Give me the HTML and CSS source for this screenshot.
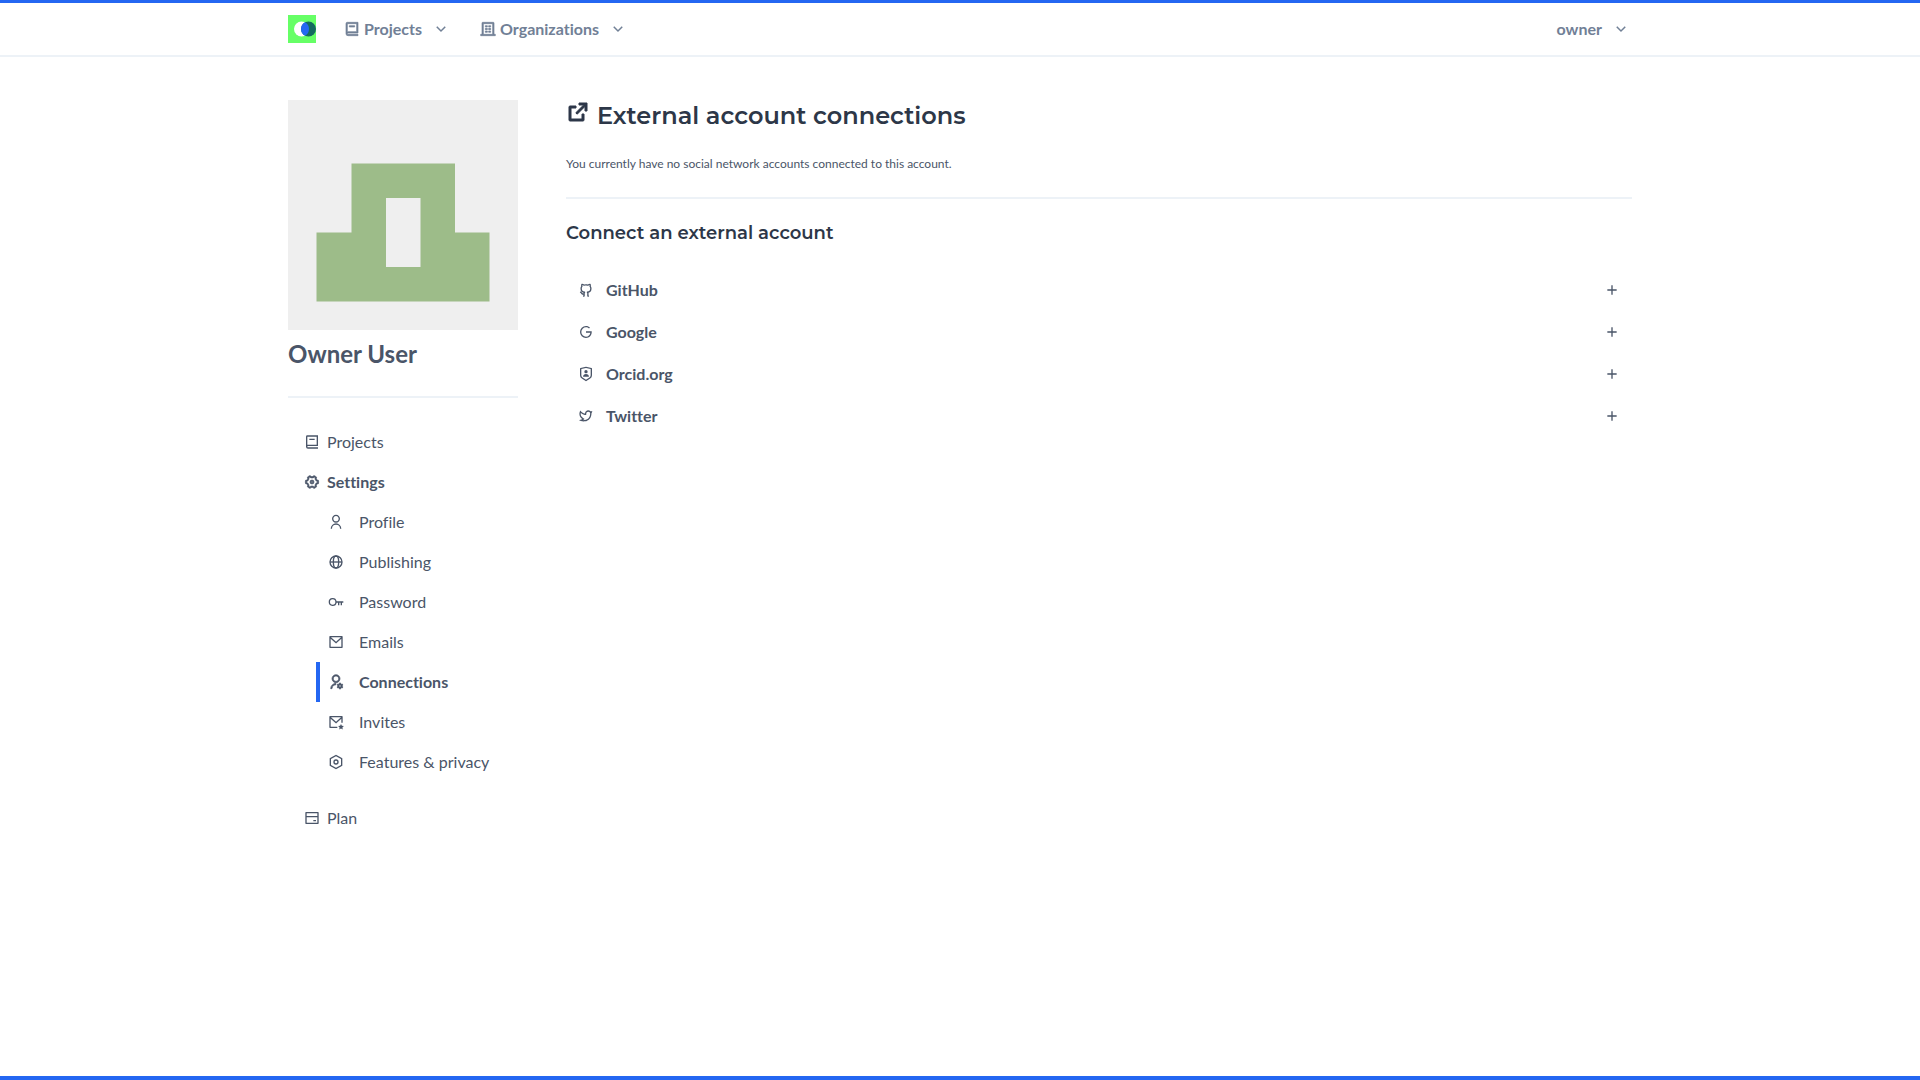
FILE: index.html
```
<!DOCTYPE html>
<html lang="en">
<head>
<meta charset="utf-8">
<title>External account connections</title>
<link rel="stylesheet" href="styles.css">
</head>
<body>
<svg class="sprite" aria-hidden="true">
  <symbol id="down" viewBox="0 0 24 24"><path d="M12 13.172l4.95-4.95 1.414 1.414L12 16 5.636 9.636 7.05 8.222z"/></symbol>
  <symbol id="book" viewBox="0 0 24 24"><path d="M21 18H6a1 1 0 0 0 0 2h15v2H6a3 3 0 0 1-3-3V4a2 2 0 0 1 2-2h16v16zM5 16.05c.162-.033.329-.05.5-.05H19V4H5v12.05zM16 9H8V7h8v2z"/></symbol>
  <symbol id="building" viewBox="0 0 24 24"><path d="M21 20h2v2H1v-2h2V3a1 1 0 0 1 1-1h16a1 1 0 0 1 1 1v17zm-2 0V4H5v16h14zM8 11h3v2H8v-2zm0-4h3v2H8V7zm0 8h3v2H8v-2zm5 0h3v2h-3v-2zm0-4h3v2h-3v-2zm0-4h3v2h-3V7z"/></symbol>
  <symbol id="gear" viewBox="0 0 24 24"><path transform="rotate(90 12 12)" d="M3.34 17a10.018 10.018 0 0 1-.978-2.326 3 3 0 0 0 .002-5.347A9.99 9.99 0 0 1 4.865 4.99a3 3 0 0 0 4.631-2.674 9.99 9.99 0 0 1 5.007.002 3 3 0 0 0 4.632 2.672c.579.59 1.093 1.261 1.525 2.01.433.749.757 1.53.978 2.326a3 3 0 0 0-.002 5.347 9.99 9.99 0 0 1-2.501 4.337 3 3 0 0 0-4.631 2.674 9.99 9.99 0 0 1-5.007-.002 3 3 0 0 0-4.632-2.672A10.018 10.018 0 0 1 3.34 17zm5.66.196a4.993 4.993 0 0 1 2.25 2.77c.499.047 1 .048 1.499.001A4.993 4.993 0 0 1 15 17.197a4.993 4.993 0 0 1 3.525-.565c.29-.408.54-.843.748-1.298A4.993 4.993 0 0 1 18 12c0-1.26.47-2.437 1.273-3.334a8.126 8.126 0 0 0-.75-1.298A4.993 4.993 0 0 1 15 6.804a4.993 4.993 0 0 1-2.25-2.77c-.499-.047-1-.048-1.499-.001A4.993 4.993 0 0 1 9 6.803a4.993 4.993 0 0 1-3.525.565 7.99 7.99 0 0 0-.748 1.298A4.993 4.993 0 0 1 6 12c0 1.26-.47 2.437-1.273 3.334a8.126 8.126 0 0 0 .75 1.298A4.993 4.993 0 0 1 9 17.196zM12 15a3 3 0 1 1 0-6 3 3 0 0 1 0 6zm0-2a1 1 0 1 0 0-2 1 1 0 0 0 0 2z"/></symbol>
  <symbol id="user" viewBox="0 0 24 24"><path d="M4 22a8 8 0 1 1 16 0h-2a6 6 0 1 0-12 0H4zm8-9c-3.315 0-6-2.685-6-6s2.685-6 6-6 6 2.685 6 6-2.685 6-6 6zm0-2c2.21 0 4-1.79 4-4s-1.79-4-4-4-4 1.79-4 4 1.79 4 4 4z"/></symbol>
  <symbol id="globe" viewBox="0 0 24 24"><g fill="none" stroke="currentColor" stroke-width="2"><circle cx="12" cy="12" r="9"/><ellipse cx="12" cy="12" rx="4" ry="9"/><path d="M3 12h18"/></g></symbol>
  <symbol id="key" viewBox="0 0 24 24"><path d="M12.917 13A6.002 6.002 0 0 1 1 12a6 6 0 0 1 11.917-1H23v2h-2v4h-2v-4h-2v4h-2v-4h-2.083zM7 16a4 4 0 1 0 0-8 4 4 0 0 0 0 8z"/></symbol>
  <symbol id="mail" viewBox="0 0 24 24"><path d="M3 3h18a1 1 0 0 1 1 1v16a1 1 0 0 1-1 1H3a1 1 0 0 1-1-1V4a1 1 0 0 1 1-1zm17 4.238l-7.928 7.1L4 7.216V19h16V7.238zM4.511 5l7.55 6.662L19.502 5H4.511z"/></symbol>
  <symbol id="user-gear" viewBox="0 0 24 24"><path d="M12 14v2a6 6 0 0 0-6 6H4a8 8 0 0 1 8-8zm0-1c-3.315 0-6-2.685-6-6s2.685-6 6-6 6 2.685 6 6-2.685 6-6 6zm0-2c2.21 0 4-1.79 4-4s-1.79-4-4-4-4 1.79-4 4 1.79 4 4 4zm2.595 7.812a3.51 3.51 0 0 1 0-1.623l-.992-.573 1-1.732.992.573A3.496 3.496 0 0 1 17 14.645V13.5h2v1.145c.532.158 1.012.44 1.405.812l.992-.573 1 1.732-.992.573a3.51 3.51 0 0 1 0 1.622l.992.573-1 1.732-.992-.573a3.496 3.496 0 0 1-1.405.812V22.500h-2v-1.145a3.496 3.496 0 0 1-1.405-.812l-.992.573-1-1.732.992-.572zM18 19.500a1.500 1.500 0 1 0 0-3 1.500 1.500 0 0 0 0 3z"/></symbol>
  <symbol id="mail-star" viewBox="0 0 24 24"><path d="M22 13h-2V7.238l-7.928 7.1L4 7.216V19h10v2H3a1 1 0 0 1-1-1V4a1 1 0 0 1 1-1h18a1 1 0 0 1 1 1v9zM4.511 5l7.55 6.662L19.502 5H4.511zM19.500 21.750l-2.645 1.390.505-2.945-2.140-2.086 2.957-.430L19.500 15l1.323 2.680 2.957.430-2.140 2.085.505 2.946z"/></symbol>
  <symbol id="hexagon" viewBox="0 0 24 24"><path d="M12 1l9.5 5.5v11L12 23l-9.500-5.500v-11L12 1zm0 2.311L4.500 7.653v8.694l7.500 4.342 7.500-4.342V7.653L12 3.311zM12 16a4 4 0 1 1 0-8 4 4 0 0 1 0 8zm0-2a2 2 0 1 0 0-4 2 2 0 0 0 0 4z"/></symbol>
  <symbol id="card" viewBox="0 0 24 24"><path d="M3 3h18a1 1 0 0 1 1 1v16a1 1 0 0 1-1 1H3a1 1 0 0 1-1-1V4a1 1 0 0 1 1-1zm17 8H4v8h16v-8zm0-2V5H4v4h16zm-6 6h4v2h-4v-2z"/></symbol>
  <symbol id="external" viewBox="0 0 24 24"><path d="M10 6v2H5v11h11v-5h2v6a1 1 0 0 1-1 1H4a1 1 0 0 1-1-1V7a1 1 0 0 1 1-1h6zm11-3v8h-2V6.413l-7.793 7.794-1.414-1.414L17.585 5H13V3h8z"/></symbol>
  <symbol id="github" viewBox="0 0 24 24"><path d="M5.883 18.653c-.3-.2-.558-.455-.86-.816a50.32 50.32 0 0 1-.466-.579c-.463-.575-.755-.84-1.057-.949a1 1 0 0 1 .676-1.883c.752.27 1.261.735 1.947 1.588-.094-.117.34.427.433.539.19.227.33.365.44.438.204.137.587.196 1.150.14.023-.382.094-.753.202-1.095C5.38 15.31 3.7 13.396 3.7 9.64c0-1.24.37-2.356 1.058-3.292-.218-.894-.185-1.975.302-3.192a1 1 0 0 1 .63-.582c.081-.024.127-.035.208-.047.803-.123 1.937.17 3.415 1.096A11.731 11.731 0 0 1 12 3.315c.912 0 1.818.104 2.684.308 1.477-.933 2.613-1.226 3.422-1.096.085.013.157.03.218.05a1 1 0 0 1 .616.58c.487 1.216.52 2.297.302 3.19.691.936 1.058 2.045 1.058 3.293 0 3.757-1.674 5.665-4.642 6.392.125.415.19.879.19 1.38a300.492 300.492 0 0 1-.012 2.716 1 1 0 0 1-.019 1.958c-1.139.228-1.983-.532-1.983-1.525l.002-.446.005-.705c.005-.708.007-1.338.007-1.998 0-.697-.183-1.152-.425-1.36-.661-.57-.326-1.655.54-1.752 2.967-.333 4.337-1.482 4.337-4.66 0-.955-.312-1.744-.913-2.404a1 1 0 0 1-.19-1.045c.166-.414.237-.957.096-1.614l-.01.003c-.491.139-1.11.44-1.858.949a1 1 0 0 1-.833.135A9.626 9.626 0 0 0 12 5.315c-.89 0-1.772.119-2.592.35a1 1 0 0 1-.83-.134c-.752-.507-1.374-.807-1.868-.947-.144.653-.073 1.194.092 1.607a1 1 0 0 1-.189 1.045C6.016 7.89 5.7 8.694 5.7 9.64c0 3.172 1.371 4.328 4.322 4.66.865.097 1.201 1.177.544 1.748-.192.168-.429.732-.429 1.364v3.15c0 .986-.835 1.725-1.96 1.528a1 1 0 0 1-.04-1.962v-.99c-.91.061-1.662-.088-2.254-.485z"/></symbol>
  <symbol id="google" viewBox="0 0 24 24"><path d="M12 11h8.533c.044.385.067.78.067 1.184 0 2.734-.98 5.036-2.678 6.6-1.485 1.371-3.518 2.175-5.942 2.175A8.976 8.976 0 0 1 3 11.98 8.976 8.976 0 0 1 11.98 3c2.42 0 4.453.89 6.008 2.339L16.526 6.8C15.368 5.681 13.803 5 12 5a7 7 0 1 0 0 14c3.526 0 6.144-2.608 6.577-6H12v-2z"/></symbol>
  <symbol id="shield" viewBox="0 0 24 24"><path d="M3.783 2.826L12 1l8.217 1.826a1 1 0 0 1 .783.976v9.987a6 6 0 0 1-2.672 4.992L12 23l-6.328-4.219A6 6 0 0 1 3 13.790V3.802a1 1 0 0 1 .783-.976zM5 4.604v9.185a4 4 0 0 0 1.781 3.328L12 20.597l5.219-3.480A4 4 0 0 0 19 13.790V4.604L12 3.050 5 4.604zM12 11a2.500 2.500 0 1 1 0-5 2.500 2.500 0 0 1 0 5zm-4.473 5a4.500 4.500 0 0 1 8.945 0H7.527z"/></symbol>
  <symbol id="twitter" viewBox="0 0 24 24"><path d="M15.3 5.55a2.9 2.9 0 0 0-2.9 2.847l-.028 1.575a.6.6 0 0 1-.68.583l-1.561-.212c-2.054-.28-4.022-1.226-5.91-2.799-.598 3.31.57 5.603 3.383 7.372l1.747 1.098a.6.6 0 0 1 .034.993L7.793 18.17c.947.059 1.846.017 2.592-.131 4.718-.942 7.855-4.492 7.855-10.348 0-.478-1.012-2.141-2.94-2.141zm-4.9 2.81a4.9 4.9 0 0 1 8.385-3.355c.711-.005 1.316.175 2.669-.645-.335 1.64-.5 2.352-1.214 3.331 0 7.642-4.697 11.358-9.463 12.309-3.268.652-8.02-.419-9.382-1.841.694-.054 3.514-.357 5.144-1.55C5.16 15.7-.329 12.47 3.278 3.786c1.693 1.977 3.41 3.323 5.15 4.037 1.158.475 1.442.465 1.973.538z"/></symbol>
  <symbol id="plus" viewBox="0 0 24 24"><path d="M11 11V5h2v6h6v2h-6v6h-2v-6H5v-2h6z"/></symbol>
</svg>

<header class="topbar">
  <nav class="container topnav" aria-label="Main">
    <a class="logo" href="#" aria-label="Home">
      <svg viewBox="0 0 28 28">
        <rect width="28" height="28" fill="#66ff66"/>
        <circle cx="13.500" cy="14" r="7.500" fill="#fff"/>
        <circle cx="20.500" cy="14" r="7.500" fill="#146a60"/>
        <path d="M17 7.367a7.500 7.500 0 0 1 0 13.266a7.500 7.500 0 0 1 0-13.266z" fill="#2467f2"/>
      </svg>
    </a>
    <button class="menu" type="button"><svg class="icon"><use href="#book"/></svg><span>Projects</span><svg class="icon chevron"><use href="#down"/></svg></button>
    <button class="menu" type="button"><svg class="icon"><use href="#building"/></svg><span>Organizations</span><svg class="icon chevron"><use href="#down"/></svg></button>
    <button class="menu account" type="button"><span>owner</span><svg class="icon chevron"><use href="#down"/></svg></button>
  </nav>
</header>

<div class="container page">
  <aside class="sidebar">
    <svg class="avatar" viewBox="0 0 230 230" role="img" aria-label="Owner User">
      <rect width="230" height="230" fill="#efefef"/>
      <path d="M63.500 63.500h103.500v69h34.500v69h-173v-69h35zM98 98v69h34.500v-69z" fill="#9dbc89" fill-rule="evenodd"/>
    </svg>
    <p class="name">Owner User</p>
    <hr>
    <nav aria-label="Account">
      <ul class="side-list">
        <li><a href="#"><svg class="icon"><use href="#book"/></svg>Projects</a></li>
        <li><a class="current" href="#"><svg class="icon"><use href="#gear"/></svg>Settings</a>
          <ul class="sub-list">
            <li><a href="#"><svg class="icon"><use href="#user"/></svg>Profile</a></li>
            <li><a href="#"><svg class="icon"><use href="#globe"/></svg>Publishing</a></li>
            <li><a href="#"><svg class="icon"><use href="#key"/></svg>Password</a></li>
            <li><a href="#"><svg class="icon"><use href="#mail"/></svg>Emails</a></li>
            <li><a class="current" href="#" aria-current="page"><svg class="icon"><use href="#user-gear"/></svg>Connections</a></li>
            <li><a href="#"><svg class="icon"><use href="#mail-star"/></svg>Invites</a></li>
            <li><a href="#"><svg class="icon"><use href="#hexagon"/></svg>Features &amp; privacy</a></li>
          </ul>
        </li>
        <li><a href="#"><svg class="icon"><use href="#card"/></svg>Plan</a></li>
      </ul>
    </nav>
  </aside>

  <main class="content">
    <h1><svg class="icon"><use href="#external"/></svg><span>External account connections</span></h1>
    <p class="note">You currently have no social network accounts connected to this account.</p>
    <hr>
    <h2>Connect an external account</h2>
    <ul class="providers">
      <li><button type="button"><svg class="icon"><use href="#github"/></svg><span>GitHub</span><svg class="icon add"><use href="#plus"/></svg></button></li>
      <li><button type="button"><svg class="icon"><use href="#google"/></svg><span>Google</span><svg class="icon add"><use href="#plus"/></svg></button></li>
      <li><button type="button"><svg class="icon"><use href="#shield"/></svg><span>Orcid.org</span><svg class="icon add"><use href="#plus"/></svg></button></li>
      <li><button type="button"><svg class="icon"><use href="#twitter"/></svg><span>Twitter</span><svg class="icon add"><use href="#plus"/></svg></button></li>
    </ul>
  </main>
</div>
<footer class="bottom-bar"></footer>
</body>
</html>
```
FILE: styles.css
```
* { box-sizing: border-box; }

body {
  margin: 0;
  min-height: 100vh;
  display: flex;
  flex-direction: column;
  background: #fff;
  color: #4a5568;
  font: 16px/24px Lato, sans-serif;
  font-variant-ligatures: no-common-ligatures;
}

a { color: inherit; text-decoration: none; }

button {
  border: 0;
  padding: 0;
  background: none;
  color: inherit;
  font: inherit;
  font-weight: 700;
  font-variant-ligatures: no-common-ligatures;
  cursor: pointer;
}

ul { margin: 0; padding: 0; list-style: none; }

hr { margin: 0; border: 0; border-top: 2px solid #edf2f7; }

.sprite { position: absolute; width: 0; height: 0; }

.icon {
  flex: none;
  width: 16px;
  height: 16px;
  fill: currentColor;
}

.container { width: 70%; margin: 0 auto; }

.topbar {
  border-top: 3px solid #2467f2;
  border-bottom: 2px solid #edf2f7;
  color: #718096;
}

.topnav { display: flex; align-items: center; height: 52px; }

.logo { margin-right: 28px; }
.logo svg { display: block; width: 28px; height: 28px; }

.menu { display: flex; align-items: center; gap: 4px; margin-right: 30px; }
.menu .icon { stroke: currentColor; stroke-width: 1px; }
.menu .chevron { width: 18px; height: 18px; margin-left: 6px; stroke: none; }
.account { margin: 0 2px 0 auto; }

.page { display: flex; flex: 1; gap: 48px; padding-top: 43px; }

.sidebar { flex: none; width: 230px; }
.avatar { display: block; width: 100%; }
.name { margin: 8px 0 26px; font-size: 24px; line-height: 32px; font-weight: 700; }

.side-list { padding: 24px 0 0 16px; }
.side-list a { display: flex; align-items: center; gap: 7px; height: 40px; }
.side-list .current { font-weight: 700; }
.side-list .current .icon { stroke: currentColor; stroke-width: 1px; }

.sub-list { padding: 0 0 16px 12px; }
.sub-list a { gap: 15px; padding-left: 8px; border-left: 4px solid transparent; }
.sub-list .current { border-left-color: #2467f2; }

.content { flex: 1; min-width: 0; }

h1, h2 {
  margin: 0;
  color: #2d3748;
  font-family: Montserrat, Inter, sans-serif;
  font-weight: 600;
}

h1 { display: flex; align-items: flex-start; gap: 7px; font-size: 24px; line-height: 32px; }
h1 .icon { width: 24px; height: 24px; stroke: currentColor; stroke-width: 1px; }
h2 { padding: 20px 0 22px; font-size: 18px; line-height: 28px; }

.note { margin: 24px 0; padding: 0 0 1px; font-size: 12px; line-height: 16px; }

.providers button {
  display: flex;
  align-items: center;
  gap: 12px;
  width: 100%;
  height: 42px;
  padding: 0 12px;
}
.providers .add { margin-left: auto; }

.bottom-bar { height: 4px; background: #2467f2; }
```
